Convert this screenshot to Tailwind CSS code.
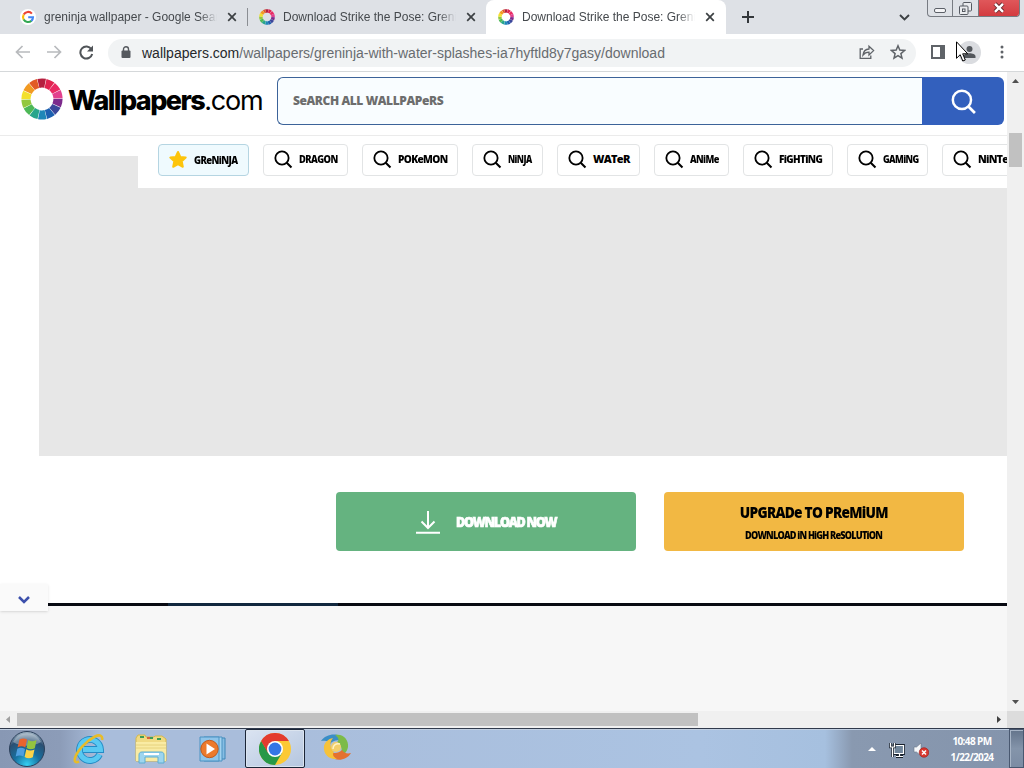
<!DOCTYPE html>
<html lang="en">
  <head>
    <meta charset="UTF-8" />
    <meta name="viewport" content="width=device-width, initial-scale=1.0" />
    <script src="https://cdn.jsdelivr.net/npm/@tailwindcss/browser@4"></script>
    <title>Download Strike the Pose: Greninja - Wallpapers.com</title>
  </head>
  <body class="w-[1024px] h-[768px] overflow-hidden bg-white font-['Liberation_Sans',sans-serif] relative flex flex-col">
    <!-- shared icons -->
    <svg class="hidden">
      <symbol id="wheel" viewBox="0 0 42 42">
        <g fill="none" stroke-width="9.2" transform="rotate(-103 21 21)">
          <circle cx="21" cy="21" r="16" pathLength="14" stroke="#b51f3f" stroke-dasharray="0.94 13.06" />
          <circle cx="21" cy="21" r="16" pathLength="14" stroke="#e0234f" stroke-dasharray="0.94 13.06" stroke-dashoffset="-1" />
          <circle cx="21" cy="21" r="16" pathLength="14" stroke="#ea2a62" stroke-dasharray="0.94 13.06" stroke-dashoffset="-2" />
          <circle cx="21" cy="21" r="16" pathLength="14" stroke="#e2408d" stroke-dasharray="0.94 13.06" stroke-dashoffset="-3" />
          <circle cx="21" cy="21" r="16" pathLength="14" stroke="#7c2a8c" stroke-dasharray="0.94 13.06" stroke-dashoffset="-4" />
          <circle cx="21" cy="21" r="16" pathLength="14" stroke="#3b479b" stroke-dasharray="0.94 13.06" stroke-dashoffset="-5" />
          <circle cx="21" cy="21" r="16" pathLength="14" stroke="#1c60b0" stroke-dasharray="0.94 13.06" stroke-dashoffset="-6" />
          <circle cx="21" cy="21" r="16" pathLength="14" stroke="#1d87b8" stroke-dasharray="0.94 13.06" stroke-dashoffset="-7" />
          <circle cx="21" cy="21" r="16" pathLength="14" stroke="#27a58c" stroke-dasharray="0.94 13.06" stroke-dashoffset="-8" />
          <circle cx="21" cy="21" r="16" pathLength="14" stroke="#4db857" stroke-dasharray="0.94 13.06" stroke-dashoffset="-9" />
          <circle cx="21" cy="21" r="16" pathLength="14" stroke="#92c83e" stroke-dasharray="0.94 13.06" stroke-dashoffset="-10" />
          <circle cx="21" cy="21" r="16" pathLength="14" stroke="#f3e02c" stroke-dasharray="0.94 13.06" stroke-dashoffset="-11" />
          <circle cx="21" cy="21" r="16" pathLength="14" stroke="#f29a22" stroke-dasharray="0.94 13.06" stroke-dashoffset="-12" />
          <circle cx="21" cy="21" r="16" pathLength="14" stroke="#e25a26" stroke-dasharray="0.94 13.06" stroke-dashoffset="-13" />
        </g>
      </symbol>
      <symbol id="close" viewBox="0 0 10 10">
        <path d="M1.2 1.2l7.6 7.6M8.8 1.2L1.2 8.8" stroke="#3c4043" stroke-width="1.7" />
      </symbol>
      <symbol id="search" viewBox="0 0 20 20">
        <circle cx="8.4" cy="8.4" r="7" fill="none" stroke="currentColor" stroke-width="1.9" />
        <path d="M13.4 13.4l5 5" stroke="currentColor" stroke-width="2.1" />
      </symbol>
    </svg>

    <!-- tab strip -->
    <div class="h-[34px] shrink-0 bg-[#dee1e6] flex items-stretch text-xs text-[#45494d]">
      <div class="w-[247px] flex items-center pl-5">
        <svg class="w-4 h-4 shrink-0" viewBox="0 0 16 16">
          <circle cx="8" cy="8" r="8" fill="#fff" />
          <g fill="none" stroke-width="2.1">
            <path d="M11.9 4.6A5 5 0 0 0 3.7 5.6" stroke="#ea4335" />
            <path d="M3.7 5.6a5 5 0 0 0 0 5" stroke="#fbbc05" />
            <path d="M3.7 10.4a5 5 0 0 0 7.8 1.3" stroke="#34a853" />
            <path d="M11.3 11.9A5 5 0 0 0 13 8.2H8.2" stroke="#4285f4" />
          </g>
        </svg>
        <div class="ml-2 w-[173px] overflow-hidden whitespace-nowrap mask-r-from-90%">greninja wallpaper - Google Sear</div>
        <svg class="w-2.5 h-2.5 ml-[10px]"><use href="#close" /></svg>
      </div>
      <div class="w-px bg-[#8b8e93] my-2"></div>
      <div class="w-[238px] flex items-center pl-[11px] rounded-br-lg">
        <svg class="w-4 h-4 shrink-0"><use href="#wheel" /></svg>
        <div class="ml-2 w-[173px] overflow-hidden whitespace-nowrap mask-r-from-90%">Download Strike the Pose: Greni</div>
        <svg class="w-2.5 h-2.5 ml-[10px]"><use href="#close" /></svg>
      </div>
      <div class="w-[240px] bg-white rounded-t-lg flex items-center pl-3">
        <svg class="w-4 h-4 shrink-0"><use href="#wheel" /></svg>
        <div class="ml-2 w-[173px] overflow-hidden whitespace-nowrap mask-r-from-90%">Download Strike the Pose: Greni</div>
        <svg class="w-2.5 h-2.5 ml-[10px]"><use href="#close" /></svg>
      </div>
      <div class="flex-1 flex items-center pl-4">
        <svg class="w-3 h-3" viewBox="0 0 12 12"><path d="M6 0v12M0 6h12" stroke="#33373b" stroke-width="2" /></svg>
        <svg class="w-[11px] h-[7px] ml-[145px]" viewBox="0 0 11 7"><path d="M1 1l4.5 4.5L10 1" fill="none" stroke="#3c4043" stroke-width="1.9" /></svg>
        <div class="ml-[17px] self-start h-[17px] w-[93px] flex border border-t-0 border-[#777b82] rounded-b-[4px] overflow-hidden">
          <div class="w-[25px] border-r border-[#777b82] flex items-end justify-center pb-[3px]">
            <div class="w-3 h-[5px] border border-[#5c6068] rounded-xs bg-[#f4f4f6]"></div>
          </div>
          <div class="w-[26px] border-r border-[#777b82] flex items-center justify-center">
            <svg class="w-[13px] h-[13px]" viewBox="0 0 13 13" fill="#e9ebee" stroke="#555961">
              <rect x="4" y=".5" width="8.5" height="8.5" rx="1" />
              <rect x=".5" y="4" width="8.5" height="8.5" rx="1" />
              <rect x="3.5" y="7" width="2.5" height="2.5" />
            </svg>
          </div>
          <div class="flex-1 bg-linear-to-b from-[#e0575a] to-[#d33b40] flex items-center justify-center">
            <svg class="w-3 h-3" viewBox="0 0 12 12"><path d="M2 1.8l8 8M10 1.8l-8 8" stroke="#682a2d" stroke-width="4.2" /><path d="M2 1.8l8 8M10 1.8l-8 8" stroke="#fff" stroke-width="2.4" /></svg>
          </div>
        </div>
      </div>
    </div>

    <!-- address bar -->
    <div class="h-[38px] shrink-0 bg-white border-b border-[#d5d8da] flex items-center pl-[15px]">
      <svg class="w-[15px] h-[14px] -mt-px" viewBox="0 0 15 14" fill="none" stroke="#b8babd" stroke-width="1.7"><path d="M15 7H1.5M7.5 1l-6 6 6 6" /></svg>
      <svg class="w-[15px] h-[14px] ml-[17px] -mt-px" viewBox="0 0 15 14" fill="none" stroke="#b8babd" stroke-width="1.7"><path d="M0 7h13.500M7.500 1l6 6-6 6" /></svg>
      <svg class="w-[15px] h-[15px] ml-[17px] -mt-px" viewBox="0 0 15 15"><path d="M12.400 4.200A6 6 0 1 0 13.200 9" fill="none" stroke="#505458" stroke-width="2" /><path d="M14 .5v6H8z" fill="#505458" /></svg>
      <div class="ml-[14px] w-[808px] h-7 rounded-full bg-[#f1f3f4] flex items-center pl-[13px]">
        <svg class="w-[10px] h-[13px]" viewBox="0 0 10 13"><rect y="4.500" x=".5" width="9" height="7.500" rx="1" fill="#55595e" /><path d="M2.500 5V3.200a2.500 2.500 0 0 1 5 0V5" fill="none" stroke="#55595e" stroke-width="1.400" /></svg>
        <div class="ml-[11px] w-[717px] text-sm text-[#686c70] whitespace-nowrap"><span class="text-[#25282b]">wallpapers.com</span>/wallpapers/greninja-with-water-splashes-ia7hyftld8y7gasy/download</div>
        <svg class="w-4 h-4 shrink-0 -mt-px" viewBox="0 0 16 16" fill="none" stroke="#5f6368" stroke-width="1.300"><path d="M4 5H1.200v9.300h10.600V11.500" /><path d="M4 11c.5-4 2.500-5.800 6-6V2.200L14.600 6.600 10 11V8.200C7.500 8.200 5.500 9 4 11z" /></svg>
        <svg class="w-4 h-4 shrink-0 ml-[15px] -mt-px" viewBox="0 0 16 16"><path d="M8 1.800l1.800 4.300 4.700.4-3.600 3.100 1.100 4.600L8 11.700l-4 2.500 1.100-4.600L1.500 6.500l4.700-.4z" fill="none" stroke="#5f6368" stroke-width="1.500" /></svg>
      </div>
      <svg class="w-[14px] h-[14px] ml-[15px] -mt-px" viewBox="0 0 14 14"><rect x="1" y="1" width="12" height="12" fill="#fff" stroke="#5f6368" stroke-width="2" /><path d="M9 1h4v12H9z" fill="#5f6368" /></svg>
      <svg class="w-[23px] h-[23px] ml-[13px] -mt-px" viewBox="0 0 23 23"><circle cx="11.500" cy="11.500" r="11.500" fill="#dadce0" /><circle cx="11.500" cy="8" r="3" fill="#53575c" /><path d="M5.500 17v-1.500c0-2 3-3.200 6-3.200s6 1.200 6 3.200V17z" fill="#53575c" /></svg>
      <svg class="w-1 h-[14px] ml-[19px] -mt-px" viewBox="0 0 4 14" fill="#5f6368"><circle cx="2" cy="2" r="1.500" /><circle cx="2" cy="7" r="1.500" /><circle cx="2" cy="12" r="1.500" /></svg>
    </div>

    <!-- viewport -->
    <div class="h-[639px] shrink-0 flex">
      <div class="w-[1007px] relative overflow-hidden flex flex-col">
        <div class="h-16 shrink-0 border-b border-[#ebebeb] flex items-start pt-[5px] pl-[21px]">
          <svg class="w-[42px] h-[42px] mt-[1px]"><use href="#wheel" /></svg>
          <div class="ml-[5px] w-[209px] mt-1 leading-10 text-[27px] font-['Inter',sans-serif] text-black whitespace-nowrap"><span class="font-extrabold tracking-[-1.55px]">Wallpapers</span><span class="tracking-[-1.2px]">.com</span></div>
          <div class="w-[645px] h-12 rounded-l-md border border-r-0 border-[#3c6399] bg-[#f9fdff] flex items-center pl-[15px]">
            <span class="font-['Open_Sans',sans-serif] font-extrabold text-xs text-[#6d6d6d] tracking-[-0.4px]">SeARCH ALL WALLPAPeRS</span>
          </div>
          <div class="w-[82px] h-12 rounded-r-md bg-[#3360bd] flex items-center justify-center text-white">
            <svg class="w-[26px] h-[26px] translate-x-px translate-y-px"><use href="#search" /></svg>
          </div>
        </div>

        <!-- related tags -->
        <div class="h-[52px] shrink-0 flex">
          <div class="w-[138px] shrink-0 pt-5 pl-[39px]"><div class="h-8 bg-[#e7e7e7]"></div></div>
          <div class="flex gap-[14px] pt-2 pl-5 font-['Open_Sans',sans-serif] font-extrabold text-[11px] tracking-[-0.7px] text-black whitespace-nowrap">
            <div class="w-[91px] h-8 shrink-0 rounded border border-[#b5d5e2] bg-[#effafe] flex items-center gap-[6px] pl-[9px]">
              <svg class="w-5 h-5 shrink-0" viewBox="0 0 20 20"><path d="M10 2l2.300 5 5.400.6-4 3.700 1.100 5.500L10 14.200 5.200 16.800l1.100-5.500-4-3.700 5.400-.6z" fill="#fdc50c" stroke="#fdc50c" stroke-width="2" stroke-linejoin="round" /></svg>
              <span class="origin-left scale-x-[.86]">GReNiNJA</span>
            </div>
            <div class="w-[85px] h-8 shrink-0 rounded border border-[#e2e4e5] flex items-center gap-[6px] pl-[10px] pb-px">
              <svg class="w-[19px] h-[19px] shrink-0"><use href="#search" /></svg><span class="origin-left scale-x-[.85]">DRAGON</span>
            </div>
            <div class="w-[96px] h-8 shrink-0 rounded border border-[#e2e4e5] flex items-center gap-[6px] pl-[10px] pb-px">
              <svg class="w-[19px] h-[19px] shrink-0"><use href="#search" /></svg><span class="origin-left scale-x-[.92]">POKeMON</span>
            </div>
            <div class="w-[71px] h-8 shrink-0 rounded border border-[#e2e4e5] flex items-center gap-[6px] pl-[10px] pb-px">
              <svg class="w-[19px] h-[19px] shrink-0"><use href="#search" /></svg><span class="origin-left scale-x-[.78]">NiNJA</span>
            </div>
            <div class="w-[83px] h-8 shrink-0 rounded border border-[#e2e4e5] flex items-center gap-[6px] pl-[10px] pb-px">
              <svg class="w-[19px] h-[19px] shrink-0"><use href="#search" /></svg><span>WATeR</span>
            </div>
            <div class="w-[75px] h-8 shrink-0 rounded border border-[#e2e4e5] flex items-center gap-[6px] pl-[10px] pb-px">
              <svg class="w-[19px] h-[19px] shrink-0"><use href="#search" /></svg><span class="origin-left scale-x-[.83]">ANiMe</span>
            </div>
            <div class="w-[90px] h-8 shrink-0 rounded border border-[#e2e4e5] flex items-center gap-[6px] pl-[10px] pb-px">
              <svg class="w-[19px] h-[19px] shrink-0"><use href="#search" /></svg><span class="origin-left scale-x-[.9]">FiGHTiNG</span>
            </div>
            <div class="w-[81px] h-8 shrink-0 rounded border border-[#e2e4e5] flex items-center gap-[6px] pl-[10px] pb-px">
              <svg class="w-[19px] h-[19px] shrink-0"><use href="#search" /></svg><span class="origin-left scale-x-[.82]">GAMiNG</span>
            </div>
            <div class="w-[100px] h-8 shrink-0 rounded border border-[#e2e4e5] flex items-center gap-[6px] pl-[10px] pb-px">
              <svg class="w-[19px] h-[19px] shrink-0"><use href="#search" /></svg><span class="origin-left scale-x-[.95]">NiNTeNDO</span>
            </div>
          </div>
        </div>
        <div class="h-[268px] shrink-0 ml-[39px] bg-[#e7e7e7]"></div>

        <!-- actions -->
        <div class="h-[147px] shrink-0 pt-9 pl-[336px] flex gap-7 font-['Open_Sans',sans-serif] font-extrabold">
          <div class="w-[300px] h-[59px] rounded bg-[#65b380] flex items-center pl-20 text-white">
            <svg class="w-6 h-6" viewBox="0 0 24 24" fill="none" stroke="#fff" stroke-width="2"><path d="M12 1v17M5.500 11.500L12 18l6.500-6.500M0 22.700h24" /></svg>
            <span class="ml-4 text-sm tracking-[-1.4px] origin-left scale-x-90 [-webkit-text-stroke:0.7px_white]">DOWNLOAD NOW</span>
          </div>
          <div class="w-[300px] h-[59px] rounded bg-[#f2b843] flex flex-col items-center pt-[9px] text-black">
            <span class="text-[15px] leading-[22px] tracking-[-0.8px] scale-x-[.915]">UPGRADe TO PReMiUM</span>
            <span class="mt-[3px] text-[11px] leading-[18px] tracking-[-0.95px] scale-x-[.83]">DOWNLOAD iN HiGH ReSOLUTiON</span>
          </div>
        </div>
        <div class="h-[3px] shrink-0 ml-12 bg-[#080a12] flex"><div class="ml-[120px] w-[170px] bg-[#12283e]"></div></div>
        <div class="flex-1 bg-[#f7f7f7]"></div>
        <div class="absolute left-0 top-[512px] w-12 h-[27px] bg-[#fafafa] shadow flex items-center justify-center">
          <svg class="w-3 h-2 mt-1" viewBox="0 0 12 8"><path d="M1 1l5 5 5-5" fill="none" stroke="#3c50ac" stroke-width="2.500" /></svg>
        </div>
      </div>
      <div class="w-[17px] bg-[#f0f0f0] flex flex-col items-center">
        <svg class="w-[7px] h-1 mt-[7px]" viewBox="0 0 7 4"><path d="M0 4l3.500-4L7 4z" fill="#505050" /></svg>
        <div class="mt-[50px] w-[13px] h-[34px] bg-[#c1c1c1]"></div>
        <svg class="w-[7px] h-1 mt-auto mb-[7px]" viewBox="0 0 7 4"><path d="M0 0h7L3.500 4z" fill="#505050" /></svg>
      </div>
    </div>
    <div class="h-[17px] shrink-0 bg-[#f0f0f0] flex items-center">
      <svg class="w-1 h-[7px] ml-[6px]" viewBox="0 0 4 7"><path d="M4 0v7L0 3.500z" fill="#a0a0a0" /></svg>
      <div class="ml-[7px] w-[681px] h-[13px] bg-[#c1c1c1]"></div>
      <svg class="w-1 h-[7px] ml-[299px]" viewBox="0 0 4 7"><path d="M0 0v7l4-3.500z" fill="#404040" /></svg>
      <div class="ml-auto w-[17px] h-full bg-[#dcdcdc]"></div>
    </div>

    <!-- taskbar -->
    <div class="h-10 shrink-0 border-t border-[#303a4c] bg-[linear-gradient(90deg,#8898b4_0,#8c9cb8_60px,#a9bddb_100px,#a9bddb_240px,#abc3e2_700px,#a6c0df_825px,#8999b0_852px,#8494ac_1024px)] shadow-[inset_0_1px_#c2d0e2] flex items-center">
      <svg class="w-[38px] h-[38px] ml-2" viewBox="0 0 38 38">
        <defs>
          <radialGradient id="orb" cx=".5" cy=".95" r=".95">
            <stop offset="0" stop-color="#35d0f2" />
            <stop offset=".4" stop-color="#176f9f" />
            <stop offset=".75" stop-color="#2b4f72" />
            <stop offset="1" stop-color="#a9bccb" />
          </radialGradient>
        </defs>
        <circle cx="19" cy="19" r="17.500" fill="url(#orb)" stroke="#2c405b" />
        <path d="M5 12a15.500 15.500 0 0 1 28 0c-9 5-19 5-28 0z" fill="#fff" opacity=".32" />
        <path d="M11.500 9.500c2.500-1.500 5-1.500 7.500 0l-1.700 8c-2.500-1.600-5-1.600-7.700-.2z" fill="#e9642e" />
        <path d="M20.300 10c2.500 1.700 5 1.500 8.200 0l-1.700 8.200c-3 1.500-5.500 1.300-8.200-.2z" fill="#94c43f" />
        <path d="M9.300 18.700c2.500-1.400 5-1.300 7.700.3l-1.600 7.500c-2.500-1.500-5-1.500-7.700 0z" fill="#4f9fe0" />
        <path d="M18.300 19.300c2.500 1.600 5.300 1.600 8.200.2l-1.700 7.800c-2.700 1.500-5.500 1.400-8.200-.3z" fill="#fbd348" />
      </svg>
      <svg class="w-8 h-8 ml-[27px]" viewBox="0 0 32 32">
        <path d="M26.500 21.500A10.500 10.500 0 1 1 27.500 16.500H10" fill="none" stroke="#248bc5" stroke-width="6.800" />
        <path d="M26.500 21.500A10.500 10.500 0 1 1 27.500 16.500H10" fill="none" stroke="#59c9f2" stroke-width="5" />
        <path d="M29 7c1-4-2-6-7-3.500C13 8 4 18 2 25c-1 4 1 5 4 3.500" fill="none" stroke="#e7bc29" stroke-width="2.600" />
      </svg>
      <svg class="w-8 h-8 ml-[30px]" viewBox="0 0 32 32">
        <path d="M1 5l2-3h7l1 2h8l1-1h7l4 3v22H1z" fill="#f0da83" stroke="#d3b74f" />
        <path d="M5 4h4M14 5h4M22 6h4" stroke="#3c9d58" stroke-width="2" />
        <path d="M12 5h3" stroke="#d6633c" stroke-width="2" />
        <path d="M1 9h30v19H1z" fill="#f9eba4" />
        <path d="M1 12h30M1 15h30" stroke="#e2cb74" stroke-width=".8" />
        <path d="M4 30V22c0-2 1-3 3-3h19c2 0 3 1 3 3v8h-6v-6H10v6z" fill="#9dd5ee" stroke="#5daed3" />
        <path d="M9 21h15" stroke="#fff" stroke-width="2" />
      </svg>
      <svg class="w-7 h-7 ml-[32px]" viewBox="0 0 28 28">
        <path d="M8 3h18v21H8z" fill="#86bde3" stroke="#3f87b7" />
        <path d="M5 2h18v24H5z" fill="#a4d3ef" stroke="#4a92c2" />
        <path d="M1 2h19v24H1z" fill="#8fc5ea" stroke="#4a92c2" />
        <circle cx="10.500" cy="14" r="8.700" fill="#ec7a2c" stroke="#bf5b20" />
        <path d="M7.500 8.500v11l8.500-5.500z" fill="#fff" />
      </svg>
      <div class="ml-[18px] w-[60px] h-[39px] rounded-xs border border-[#1b2537] bg-linear-to-br from-[#dbe4f2] to-[#b5c6df] shadow-[inset_0_0_0_1px_#dbe4ef] flex items-center justify-center">
        <svg class="w-8 h-8" viewBox="0 0 32 32">
          <circle cx="16" cy="16" r="16" fill="#fcc934" />
          <path d="M16 16L22.900 20 16 32A16 16 0 0 1 2.140 8L9 19z" fill="#279847" />
          <path d="M16 8h13.860A16 16 0 0 0 2.140 8L9.100 20z" fill="#e33b2e" />
          <circle cx="16" cy="16" r="8" fill="#fff" />
          <circle cx="16" cy="16" r="6.400" fill="#3476e5" />
        </svg>
      </div>
      <svg class="w-[30px] h-7 ml-4 -mt-[3px]" viewBox="0 0 30 28">
        <path d="M0 8C4 2 13 0 19 3c4 2 6 5 6 8-5-5-12-5-16 0-1-3-4-4-9-3z" fill="#3a8ec6" />
        <path d="M14 2c8-2 14 5 13 12-1 5-4 8-8 9 3-5 2-11-3-14 3-2 1-5-2-7z" fill="#7cbb48" />
        <path d="M30 20c-4 7-14 9-20 4-3-2-5-5-5-8 5 5 12 5 16 1 2 3 5 4 9 3z" fill="#e5712f" />
        <path d="M16 26C8 27 2 21 3 13c1-4 4-7 9-8-4 5-3 10 1 14-2 2-1 5 3 7z" fill="#f6c23a" />
        <circle cx="15" cy="14" r="5" fill="#f3cf6c" />
        <path d="M12 16c0-4 3-6 7-5" fill="none" stroke="#fff3c4" stroke-width="1.500" />
      </svg>
      <svg class="w-2 h-1 ml-auto" viewBox="0 0 8 4"><path d="M0 4l4-4 4 4z" fill="#fff" /></svg>
      <svg class="w-4 h-4 ml-[13px] mt-[2px]" viewBox="0 0 16 16">
        <path d="M5 3.500h9.500v8H5zM7 14.500h7M10.500 12v2" fill="#607388" stroke="#17202c" stroke-width="2.800" />
        <path d="M5 3.500h9.500v8H5zM7 14.500h7M10.500 12v2" fill="#71869b" stroke="#fff" stroke-width="1.200" />
        <path d="M1.500 1v4h4V1M3.500 5v10" fill="none" stroke="#17202c" stroke-width="2.600" />
        <path d="M1.500 1v4h4V1M3.500 5v10" fill="none" stroke="#fff" stroke-width="1.200" />
      </svg>
      <svg class="w-4 h-4 ml-2 mt-[2px]" viewBox="0 0 16 16">
        <path d="M1 5h2.500L8 1v13l-4.500-4H1z" fill="#f5f7fa" stroke="#6a7688" stroke-width=".6" />
        <circle cx="11" cy="10.500" r="4.800" fill="#d8372e" stroke="#981d1a" stroke-width=".6" />
        <path d="M9 8.500l4 4M13 8.500l-4 4" stroke="#fff" stroke-width="1.500" />
      </svg>
      <div class="ml-[17px] w-[52px] text-center font-['Open_Sans',sans-serif] font-bold text-[10px] leading-4 tracking-[-0.6px] text-white whitespace-nowrap">
        <div>10:48 PM</div>
        <div>1/22/2024</div>
      </div>
      <div class="ml-[11px] w-[15px] h-full border border-[#495870] bg-linear-to-b from-[#64748b] via-[#8494aa] to-[#7c8ca4] shadow-[inset_1px_1px_#a7b4c6]"></div>
    </div>

    <!-- mouse pointer -->
    <svg class="absolute left-[956px] top-[41px] w-3 h-[21px]" viewBox="0 0 12 21"><path d="M.5.800v16.500l3.700-3.600 2.600 6.300 2.500-1-2.600-6.200h5z" fill="#fff" stroke="#000" /></svg>
  </body>
</html>
